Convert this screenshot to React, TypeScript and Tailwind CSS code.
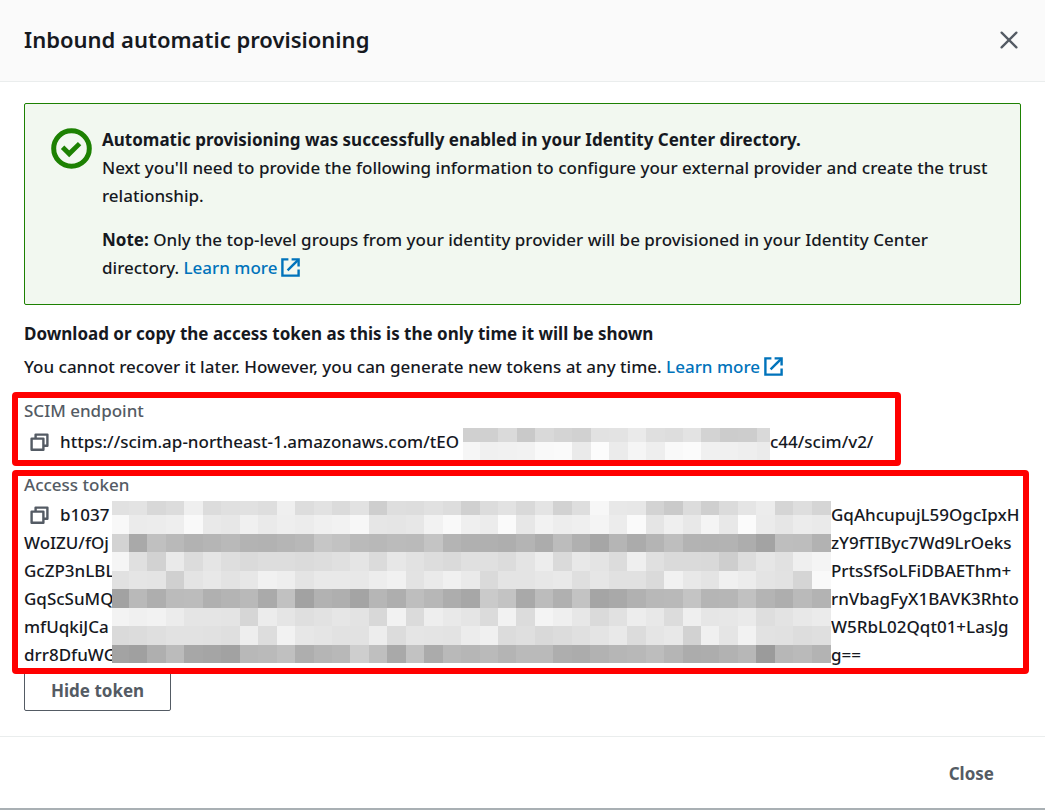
import { useState } from "react";

const ENDPOINT_BLOCKS = [
  "d0d0dac9d9d4d1e2e3eadfdde3d3cccdd9",
  "f6f0f1f2f9faeafcebf5eef9fbf0f0eeeb",
];

const TOKEN_BLOCKS = [
  "e1e3d8dcefdce0e1deefdde2dbe2cededde1ddd0dce2d9e4d2def7e8e7d3cadccfdbe5ecd5ded5",
  "f8ebeceef9e9e7f0eaeeecf0f2f7e6e5e7f2f9efecfae7f2edeff4ecfae5efe8f4e8fbebe6ecea",
  "d3a9c0b9b2b5b9b3b2b5b8c6c2bab8bbbac4b4b0b0aeb4acbcb0a6b5abb4beb3b2b3ada3bebdb2",
  "f5e0d2eadce5dedadddddbdde0e5dbe7e2dddae0e0dce4eddae8e4dcefe0dadad9cedde6e1eff4",
  "e1e5e4d0e4e8e3e7f1eee4e9e9e8edf1e3eaf0eadae4e4e7e9dfe6e1e1daf1e8e4f0ece4e2d5f9",
  "a2b9aebbbcb0b4b9aac1a2b2afa4b6aebeb7ada7cac3a9bcb0c3a5a9b1b8b9c4b5b6c1b4aebab3",
  "f3f0f2ece5e5e4d6ece5dfe2e6e3d8f2dbeee9e5dbf2dcf4efe7dae1ede8dcefe6e7eadee3e8eb",
  "dadcdfe2e2e1dfeeddf2e7e5e2e2eddce5e4e3ecf0dcdfd9dce0e4e9dce5e8d2f0e5f2e2e1dddf",
  "a3a0afbba7a5a2b8bac0aeb5b8cebfa9c2abb9b6bab4babaaeacb2b6b8bdb5acadb2b79bb7bab3",
];

const TOKEN_START = ["WoIZU/fOj", "GcZP3nLBL", "GqScSuMQ", "mfUqkiJCa", "drr8DfuWG"];
const TOKEN_END = [
  "GqAhcupujL59OgcIpxH",
  "zY9fTIByc7Wd9LrOeks",
  "PrtsSfSoLFiDBAEThm+",
  "rnVbagFyX1BAVK3Rhto",
  "W5RbL02Qqt01+LasJg",
  "g==",
];

// Each row is a string of two-digit grey levels, one per block
function Mosaic({ rows, width, height, className }: { rows: string[]; width: number; height: number; className: string }) {
  const size = 18.45;
  const firstHeight = height - size * (rows.length - 1);
  return (
    <svg className={className} viewBox={`0 0 ${width} ${height}`} preserveAspectRatio="none" shapeRendering="crispEdges" aria-hidden="true">
      {rows.map((row, r) =>
        (row.match(/../g) ?? []).map((g, c) => (
          <rect
            key={`${r}-${c}`}
            x={c === 0 ? 0 : 17 + (c - 1) * size}
            y={r === 0 ? 0 : firstHeight + (r - 1) * size}
            width={size + 0.5}
            height={size + 0.5}
            fill={`#${g}${g}${g}`}
          />
        ))
      )}
    </svg>
  );
}

function CopyButton({ label }: { label: string }) {
  return (
    <button type="button" aria-label={label} className="ml-1.5 mr-[11px] shrink-0 text-[#545b64]">
      <svg className="size-[19px]" viewBox="0 0 19 19" fill="none" stroke="currentColor" strokeWidth="2.4" strokeLinejoin="round" aria-hidden="true">
        <path d="M1.6 5.6h11.8v11.2H1.6z" />
        <path d="M5.6 5.2V1.6h11.8v11.2h-3.6" />
      </svg>
    </button>
  );
}

function LearnMore() {
  return (
    <a href="#" className="whitespace-nowrap text-[#0073bb]">
      Learn more
      <svg className="mb-1 ml-1 inline size-[19px]" viewBox="0 0 19 19" fill="none" stroke="currentColor" strokeWidth="2.4" aria-hidden="true">
        <path d="M7.4 1.4H1.4v16.2h16.2v-6" />
        <path d="M10.6 1.4h7v7" />
        <path d="M17.4 1.6L6.6 12.4" />
      </svg>
    </a>
  );
}

export default function App() {
  const [hidden, setHidden] = useState(false);

  return (
    <div role="dialog" aria-labelledby="title" className="w-full border-b-2 border-[#a9b0b4] bg-white font-['Noto_Sans',sans-serif] text-[17px] leading-7 font-medium text-[#16191f]">
      <header className="flex items-center justify-between border-b border-[#eaeded] bg-[#fafafa] px-6 pt-[25px] pb-7">
        <h1 id="title" className="text-[22px] leading-7 font-semibold">Inbound automatic provisioning</h1>
        <button type="button" aria-label="Close dialog" className="mt-0.5 mr-[3px] text-[#545b64]">
          <svg className="size-[18px]" viewBox="0 0 18 18" fill="none" stroke="currentColor" strokeWidth="2.3" strokeLinecap="round" aria-hidden="true">
            <path d="M1.6 1.6l14.8 14.8M16.4 1.6L1.6 16.4" />
          </svg>
        </button>
      </header>

      <main className="px-6 pt-[21px] pb-[25px]">
        <section className="flex gap-2.5 rounded-xs border border-[#1d8102] bg-[#f2f8f0] py-[22px] pr-8 pl-[26px]">
          <svg className="mt-0.5 size-[41px] shrink-0 text-[#1d8102]" viewBox="0 0 41 41" fill="none" stroke="currentColor" aria-hidden="true">
            <circle cx="20.5" cy="20.5" r="17.8" strokeWidth="5" />
            <path d="M11.6 19.2l6.6 6.6 10.4-10.2" strokeWidth="4.8" />
          </svg>
          <div className="space-y-4">
            <p>
              <strong className="font-bold">Automatic provisioning was successfully enabled in your Identity Center directory.</strong>
              <br />
              Next you'll need to provide the following information to configure your external provider and create the trust relationship.
            </p>
            <p>
              <strong className="font-bold">Note:</strong> Only the top-level groups from your identity provider will be provisioned in your Identity Center directory. <LearnMore />
            </p>
          </div>
        </section>

        <h2 className="mt-[15px] font-bold">Download or copy the access token as this is the only time it will be shown</h2>
        <p className="mt-[5px]">
          You cannot recover it later. However, you can generate new tokens at any time. <LearnMore />
        </p>

        <section className="mt-[11px] -ml-3 mr-[120px] rounded-sm border-6 border-[#ff0000] pl-1.5">
          <h3 className="mb-1 leading-[26px] text-[#545b64]">SCIM endpoint</h3>
          <div className="flex h-8 pr-[125px]">
            <div className="flex h-7 w-[439px] shrink-0 items-center">
              <CopyButton label="Copy SCIM endpoint" />
              <span>https://scim.ap-northeast-1.amazonaws.com/tEO</span>
            </div>
            <Mosaic rows={ENDPOINT_BLOCKS} width={307} height={32} className="h-8 min-w-0 flex-1" />
            <span className="w-0 whitespace-nowrap">c44/scim/v2/</span>
          </div>
        </section>

        <section className="relative mt-1 -mr-2 -ml-3 rounded-sm border-6 border-[#ff0000] pl-1.5">
          <h3 className="mb-[7px] leading-[18px] text-[#545b64]">Access token</h3>
          <div className="grid h-[167px] grid-cols-[88px_1fr_192px]">
            <div className="whitespace-nowrap">
              <div className="flex items-center">
                <CopyButton label="Copy access token" />
                b1037
              </div>
              {TOKEN_START.map((line) => (
                <div key={line}>{line}</div>
              ))}
            </div>
            <Mosaic rows={TOKEN_BLOCKS} width={719} height={162} className="relative h-[162px] w-full" />
            <div className="whitespace-nowrap">
              {TOKEN_END.map((line) => (
                <div key={line}>{line}</div>
              ))}
            </div>
          </div>
        </section>

        <button
          type="button"
          onClick={() => setHidden(!hidden)}
          className="-mt-1 block rounded-xs border border-[#545b64] px-[26px] pt-1.5 pb-[5px] font-bold text-[#545b64]"
        >
          {hidden ? "Show token" : "Hide token"}
        </button>
      </main>

      <footer className="flex justify-end border-t border-[#eaeded] px-[51px] pt-[23px] pb-5">
        <button type="button" className="font-bold text-[#545b64]">Close</button>
      </footer>
    </div>
  );
}
